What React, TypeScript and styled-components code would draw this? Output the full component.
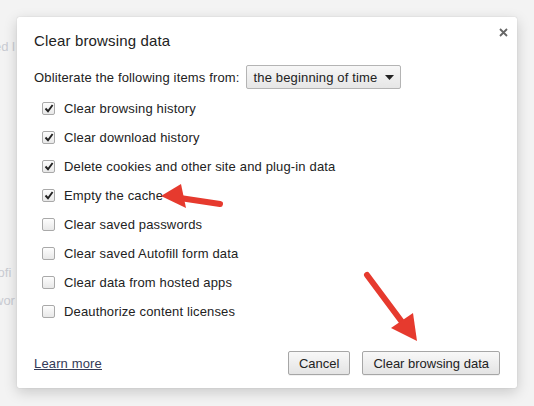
import styled, { createGlobalStyle } from "styled-components"

const GlobalStyle = createGlobalStyle`
  html, body {
    margin: 0;
    padding: 0;
    background: #f3f3f3;
  }
  body {
    font-family: "Liberation Sans", Arial, sans-serif;
    color: #222;
  }
`

const Screen = styled.div`
  position: relative;
  width: 534px;
  height: 406px;
  overflow: hidden;
  background: #f3f3f3;
`

const Behind = styled.div`
  display: flex;
  flex-direction: column;
  padding: 39px 0 0 0;
  margin-left: -6px;
  font-size: 13px;
  color: #c9cbd2;
`

const BehindLine = styled.div<{ $gap: number }>`
  margin-top: ${(p) => p.$gap}px;
  white-space: nowrap;
`

const Dialog = styled.div`
  position: absolute;
  left: 17px;
  top: 17px;
  width: 500px;
  height: 371px;
  background: #fff;
  border-radius: 2px;
  box-shadow: 0 4px 14px rgba(0, 0, 0, 0.18), 0 0 1px rgba(0, 0, 0, 0.25);
  box-sizing: border-box;
  padding: 14px 17px 0 17px;
  display: flex;
  flex-direction: column;
  letter-spacing: 0.15px;
`

const Header = styled.div`
  display: flex;
  justify-content: space-between;
  align-items: flex-start;
`

const Title = styled.h1`
  margin: 0;
  font-size: 15px;
  font-weight: 400;
  color: #222;
  line-height: 20px;
`

const Close = styled.button`
  border: 0;
  background: none;
  padding: 0;
  margin: -6px -10px 0 0;
  width: 14px;
  height: 14px;
  display: flex;
  align-items: center;
  justify-content: center;
  cursor: pointer;
`

const RangeRow = styled.div`
  display: flex;
  align-items: center;
  gap: 6px;
  margin-top: 14px;
  font-size: 13px;
`

const Select = styled.div`
  display: flex;
  align-items: center;
  gap: 8px;
  height: 22px;
  padding: 0 6px 0 7px;
  border: 1px solid #b4b4b4;
  border-radius: 2px;
  background: linear-gradient(#f7f7f7, #e6e6e6);
  font-size: 13px;
  color: #222;
`

const Options = styled.div`
  display: flex;
  flex-direction: column;
  margin-top: 5px;
`

const OptionRow = styled.label`
  display: flex;
  align-items: center;
  height: 29px;
  padding-left: 8px;
  gap: 9px;
  font-size: 13px;
`

const Box = styled.span`
  width: 11px;
  height: 11px;
  border: 1px solid #a9a9a9;
  border-radius: 2px;
  background: linear-gradient(#fdfdfd, #e8e8e8);
  display: flex;
  align-items: center;
  justify-content: center;
`

const Footer = styled.div`
  margin-top: auto;
  display: flex;
  align-items: center;
  justify-content: space-between;
  padding-bottom: 13px;
`

const LearnMore = styled.a`
  font-size: 13px;
  color: #333a57;
  text-decoration: underline;
`

const Buttons = styled.div`
  display: flex;
  gap: 12px;
`

const Button = styled.button`
  height: 24px;
  padding: 0 10px;
  border: 1px solid #a6a6a6;
  border-radius: 2px;
  background: linear-gradient(#f8f8f8, #e4e4e4);
  font-family: inherit;
  font-size: 13px;
  color: #222;
  box-shadow: 0 1px 0 rgba(0, 0, 0, 0.05);
`

const Arrows = styled.svg`
  position: absolute;
  left: 0;
  top: 0;
  pointer-events: none;
`

const options = [
  { label: "Clear browsing history", checked: true },
  { label: "Clear download history", checked: true },
  { label: "Delete cookies and other site and plug-in data", checked: true },
  { label: "Empty the cache", checked: true },
  { label: "Clear saved passwords", checked: false },
  { label: "Clear saved Autofill form data", checked: false },
  { label: "Clear data from hosted apps", checked: false },
  { label: "Deauthorize content licenses", checked: false },
]

function Check({ on }: { on: boolean }) {
  return (
    <Box>
      {on && (
        <svg width="10" height="9" viewBox="0 0 10 9">
          <path d="M1.5 4.5 L4 7.2 L8.6 1" fill="none" stroke="#222" strokeWidth="1.9" />
        </svg>
      )}
    </Box>
  )
}

export default function App() {
  return (
    <>
      <GlobalStyle />
      <Screen>
        <Behind>
          <BehindLine $gap={0}>ed l</BehindLine>
          <BehindLine $gap={211}>tofi</BehindLine>
          <BehindLine $gap={13}>wor</BehindLine>
        </Behind>

        <Dialog>
          <Header>
            <Title>Clear browsing data</Title>
            <Close aria-label="Close">
              <svg width="9" height="9" viewBox="0 0 9 9">
                <path d="M1 1 L8 8 M8 1 L1 8" stroke="#666" strokeWidth="1.8" />
              </svg>
            </Close>
          </Header>

          <RangeRow>
            <span>Obliterate the following items from:</span>
            <Select>
              <span>the beginning of time</span>
              <svg width="9" height="5" viewBox="0 0 9 5">
                <path d="M0 0 H9 L4.5 5 Z" fill="#222" />
              </svg>
            </Select>
          </RangeRow>

          <Options>
            {options.map((o) => (
              <OptionRow key={o.label}>
                <Check on={o.checked} />
                <span>{o.label}</span>
              </OptionRow>
            ))}
          </Options>

          <Footer>
            <LearnMore href="#">Learn more</LearnMore>
            <Buttons>
              <Button>Cancel</Button>
              <Button>Clear browsing data</Button>
            </Buttons>
          </Footer>
        </Dialog>

        <Arrows width="534" height="406" viewBox="0 0 534 406">
          <path d="M220 204 L180 198" stroke="#e63a2e" strokeWidth="6" strokeLinecap="round" />
          <path d="M161 196 L181 184 L186 208 Z" fill="#e63a2e" />
          <path d="M367 275 L402 322" stroke="#e63a2e" strokeWidth="6" strokeLinecap="round" />
          <path d="M417 341 L391 328 L413 313 Z" fill="#e63a2e" />
        </Arrows>
      </Screen>
    </>
  )
}
